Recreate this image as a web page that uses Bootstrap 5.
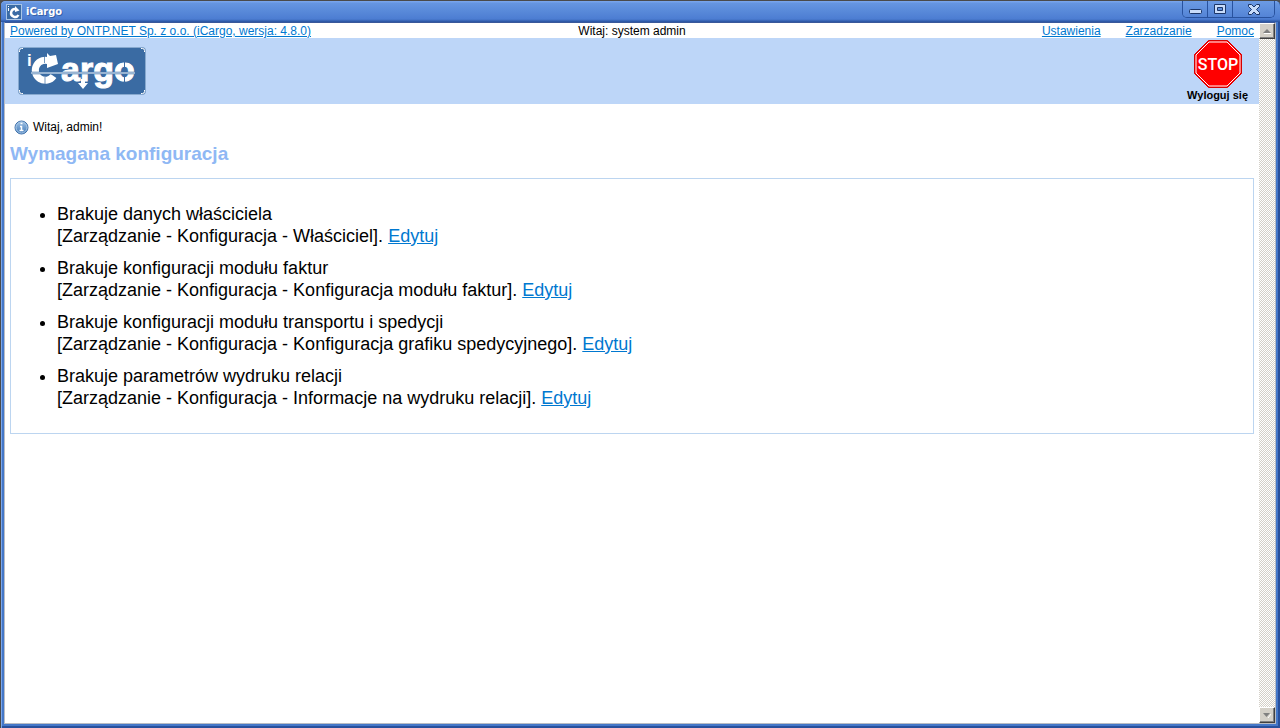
<!DOCTYPE html>
<html lang="pl">
<head>
<meta charset="utf-8">
<meta name="viewport" content="width=device-width, initial-scale=1">
<title>iCargo</title>
<link href="https://cdn.jsdelivr.net/npm/bootstrap@5.3.0/dist/css/bootstrap.min.css" rel="stylesheet">
<script src="https://cdn.jsdelivr.net/npm/bootstrap@5.3.0/dist/js/bootstrap.bundle.min.js" defer></script>
<style>
body { font: 12px/16px "Liberation Sans", Arial, sans-serif; color: #000; background: #505050; }
a { color: #0078d0; }
.window-frame { background: #4477c8; border: 1px solid #4a4a4a; border-width: 1px 0 0 1px; border-radius: 5px 5px 0 0; box-shadow: inset 1px 1px #7ba6ea, inset -2px -2px #28509c; padding: 0 4px 4px 3px; }
.title-bar { height: 21px; margin: 0 -4px 0 -3px; padding-left: 5px; border-radius: 5px 5px 0 0; background: linear-gradient(#7ca8ee, #6595e0 12%, #4c7dd2 86%, #28529e); color: #fff; }
.title-text { font: bold 11px/21px "DejaVu Sans Condensed", "DejaVu Sans", sans-serif; text-shadow: 1px 1px #3560a8; }
.window-buttons { height: 17px; margin-right: 5px; border: 1px solid #28529e; border-top: 0; border-radius: 0 0 5px 5px; overflow: hidden; }
.window-buttons button { width: 25px; padding: 0; border: 0; border-right: 1px solid #28529e; background: linear-gradient(#6c9be4, #5484d6); display: flex; align-items: center; justify-content: center; }
.window-buttons button:first-child { align-items: flex-end; padding-bottom: 3px; }
.window-buttons button:last-child { width: 41px; border-right: 0; }
.client { background: #fff; border: 1px solid #b8bcc4; border-top-color: #39589a; min-height: 0; }
.top-links { height: 15px; padding: 0 5px; }
.menu-links { gap: 25px; }
.banner { height: 66px; background: #bdd6f8; padding: 0 11px 0 13px; }
.logout { font-size: 11px; font-weight: bold; line-height: 14px; color: #000; text-decoration: none; padding-top: 2px; }
.notice { margin: 15px 9px 0; gap: 4px; }
.page-title { font-size: 19px; line-height: 24px; font-weight: bold; color: #8fb8f4; margin: 7px 5px 12px; }
.config-box { border: 1px solid #bcd5f0; margin: 0 5px; padding: 24px 24px 24px 46px; font-size: 18px; line-height: 22px; }
.config-box ul { padding: 0; margin: 0; }
.config-box li + li { margin-top: 10px; }
.scroll-track { width: 16px; background: repeating-conic-gradient(#d4d0c8 0 25%, #fff 0 50%) 0 0 / 2px 2px; }
.scroll-track button { width: 16px; height: 16px; padding: 0; display: flex; align-items: center; justify-content: center; background: #d4d0c8; border: 1px solid; border-color: #fff #404040 #404040 #fff; box-shadow: inset -1px -1px #808080; }
</style>
</head>
<body>
<div class="window-frame vh-100 d-flex flex-column">
  <header class="title-bar d-flex flex-shrink-0">
    <svg class="me-1 align-self-center" width="16" height="16" viewBox="0 0 16 16" aria-hidden="true">
      <rect x=".5" y=".5" width="15" height="15" fill="#3a6ba5" stroke="#a9c5e6"/>
      <path d="M2 2.500h1M2.500 4v3" stroke="#fff"/>
      <path d="M9.500 5A4 4 0 1 0 12.500 11" fill="none" stroke="#fff" stroke-width="2.400"/>
      <path d="M9 2l4.500 4.500L9 8z" fill="#fff"/>
    </svg>
    <span class="title-text">iCargo</span>
    <div class="window-buttons d-flex ms-auto">
      <button type="button" aria-label="Minimalizuj"><svg width="13" height="5"><rect x=".5" y=".5" width="12" height="4" rx="1" fill="#c8dcfa" stroke="#1c3668"/></svg></button>
      <button type="button" aria-label="Maksymalizuj"><svg width="12" height="10"><path d="M.5.5h11v9H.5zM3.500 3.500h5v3h-5z" fill="#c8dcfa" fill-rule="evenodd" stroke="#1c3668"/></svg></button>
      <button type="button" aria-label="Zamknij"><svg width="12" height="11"><path d="M.5.5h3l2.500 2.500L8.500.5h3v2l-3 3 3 3v2h-3L6 8l-2.500 2.500h-3v-2l3-3-3-3z" fill="#c8dcfa" stroke="#1c3668"/></svg></button>
    </div>
  </header>

  <div class="client d-flex flex-grow-1">
    <main class="flex-grow-1">
      <div class="top-links row g-0 text-nowrap">
        <div class="col"><a href="#">Powered by ONTP.NET Sp. z o.o. (iCargo, wersja: 4.8.0)</a></div>
        <div class="col-auto">Witaj: system admin</div>
        <nav class="col menu-links d-flex justify-content-end">
          <a href="#">Ustawienia</a><a href="#">Zarzadzanie</a><a href="#">Pomoc</a>
        </nav>
      </div>
      <div class="banner d-flex justify-content-between align-items-center">
        <svg width="128" height="48" viewBox="0 0 128 48" role="img" aria-label="iCargo">
          <rect x=".5" y=".5" width="127" height="47" rx="3" fill="#3a6ba3" stroke="#87a9cf"/>
          <path d="M1.500 5V3.500q0-2 2-2H5M123 1.500h1.500q2 0 2 2V5M126.500 43v1.500q0 2-2 2H123M5 46.500H3.500q-2 0-2-2V43" fill="none" stroke="#fff"/>
          <text x="9" y="19" font-family="Liberation Sans, sans-serif" font-weight="bold" font-size="17" fill="#fff">i</text>
          <path d="M32 14.500A10 10 0 1 0 35.500 29" fill="none" stroke="#fff" stroke-width="7"/>
          <path d="M29 6l3 3 6-1 2 9-11 4z" fill="#fff"/>
          <path d="M26.500 9v7M27 30v7" stroke="#3a6ba3" stroke-width=".7"/>
          <text x="43" y="34" font-family="Liberation Sans, sans-serif" font-weight="bold" font-size="34" fill="#fff" stroke="#fff">argo</text>
          <path d="M63 32v4h-3l5 6 5-6h-3v-4z" fill="#fff"/>
          <path d="M106.500 14v6M106.500 30v7" stroke="#3a6ba3"/>
          <path d="M13 26h104" stroke="#3a6ba3" stroke-width="2.500"/>
          <path d="M13 26h104" stroke="#b9cce2" stroke-width="1.500"/>
        </svg>
        <a class="logout d-flex flex-column align-items-center align-self-start" href="#">
          <svg width="48" height="48" viewBox="0 0 48 48" aria-hidden="true">
            <path d="M14.500.5h19l14 14v19l-14 14h-19l-14-14v-19z" fill="#f00" stroke="#d40000"/>
            <path d="M15 2h18l13 13v18L33 46H15L2 33V15z" fill="none" stroke="#fff"/>
            <text x="24" y="30" text-anchor="middle" font-family="Roboto, sans-serif" font-weight="500" font-size="16" fill="#fff">STOP</text>
          </svg>
          <span>Wyloguj się</span>
        </a>
      </div>
      <div class="notice d-flex align-items-center">
        <svg width="15" height="15" viewBox="0 0 15 15" aria-hidden="true">
          <defs><linearGradient id="ball" x2="0" y2="1"><stop stop-color="#a3c4e6"/><stop offset="1" stop-color="#3d77b7"/></linearGradient></defs>
          <circle cx="7.500" cy="7.500" r="6.500" fill="url(#ball)" stroke="#3f70aa"/>
          <circle cx="7.500" cy="7.500" r="5.500" fill="none" stroke="#a8c7e5"/>
          <path d="M6.500 3.500h2M6 6.500h1.500V11M5.500 10.500h4" fill="none" stroke="#fff" stroke-width="1.500"/>
        </svg>
        <span>Witaj, admin!</span>
      </div>
      <h1 class="page-title">Wymagana konfiguracja</h1>
      <section class="config-box">
        <ul>
          <li>Brakuje danych właściciela<br>[Zarządzanie - Konfiguracja - Właściciel]. <a href="#">Edytuj</a></li>
          <li>Brakuje konfiguracji modułu faktur<br>[Zarządzanie - Konfiguracja - Konfiguracja modułu faktur]. <a href="#">Edytuj</a></li>
          <li>Brakuje konfiguracji modułu transportu i spedycji<br>[Zarządzanie - Konfiguracja - Konfiguracja grafiku spedycyjnego]. <a href="#">Edytuj</a></li>
          <li>Brakuje parametrów wydruku relacji<br>[Zarządzanie - Konfiguracja - Informacje na wydruku relacji]. <a href="#">Edytuj</a></li>
        </ul>
      </section>
    </main>
    <div class="scroll-track d-flex flex-column justify-content-between flex-shrink-0">
      <button type="button" aria-label="W górę"><svg width="8" height="5"><path d="M0 4l4-4 4 4z" fill="#808080"/><path d="M1 4.500h7" stroke="#fff"/></svg></button>
      <button type="button" aria-label="W dół"><svg width="8" height="5"><path d="M5 5l3-4" stroke="#fff"/><path d="M0 0h7L3.500 4z" fill="#808080"/></svg></button>
    </div>
  </div>
</div>
</body>
</html>
